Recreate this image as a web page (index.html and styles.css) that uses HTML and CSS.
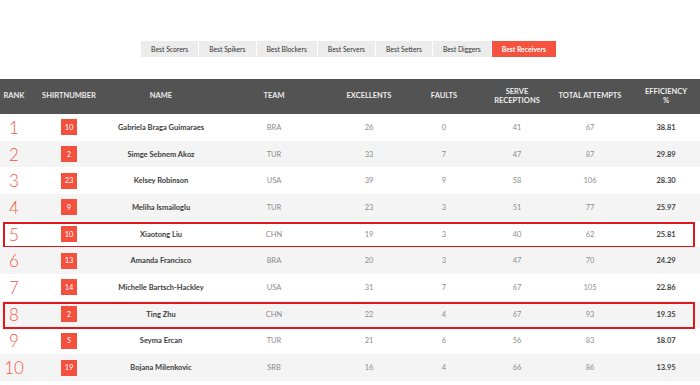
FILE: index.html
```html
<!DOCTYPE html>
<html lang="en">
<head>
    <meta charset="UTF-8">
    <title>Best Receivers</title>
    <link rel="stylesheet" href="styles.css">
</head>
<body>
    <nav class="tabs">
        <a class="tab">Best Scorers</a>
        <a class="tab">Best Spikers</a>
        <a class="tab">Best Blockers</a>
        <a class="tab">Best Servers</a>
        <a class="tab">Best Setters</a>
        <a class="tab">Best Diggers</a>
        <a class="tab active">Best Receivers</a>
    </nav>

    <div class="stats">
        <div class="row head">
            <div>RANK</div>
            <div>SHIRTNUMBER</div>
            <div>NAME</div>
            <div>TEAM</div>
            <div>EXCELLENTS</div>
            <div>FAULTS</div>
            <div>SERVE<br>RECEPTIONS</div>
            <div>TOTAL ATTEMPTS</div>
            <div>EFFICIENCY<br>%</div>
        </div>

        <div class="row">
            <div class="rank">1</div><div><span class="shirt">10</span></div>
            <div class="name">Gabriela Braga Guimaraes</div><div class="num">BRA</div>
            <div class="num">26</div><div class="num">0</div><div class="num">41</div><div class="num">67</div>
            <div class="eff">38.81</div>
        </div>
        <div class="row">
            <div class="rank">2</div><div><span class="shirt">2</span></div>
            <div class="name">Simge Sebnem Akoz</div><div class="num">TUR</div>
            <div class="num">33</div><div class="num">7</div><div class="num">47</div><div class="num">87</div>
            <div class="eff">29.89</div>
        </div>
        <div class="row">
            <div class="rank">3</div><div><span class="shirt">23</span></div>
            <div class="name">Kelsey Robinson</div><div class="num">USA</div>
            <div class="num">39</div><div class="num">9</div><div class="num">58</div><div class="num">106</div>
            <div class="eff">28.30</div>
        </div>
        <div class="row">
            <div class="rank">4</div><div><span class="shirt">9</span></div>
            <div class="name">Meliha Ismailoglu</div><div class="num">TUR</div>
            <div class="num">23</div><div class="num">3</div><div class="num">51</div><div class="num">77</div>
            <div class="eff">25.97</div>
        </div>
        <div class="row marked">
            <div class="rank">5</div><div><span class="shirt">10</span></div>
            <div class="name">Xiaotong Liu</div><div class="num">CHN</div>
            <div class="num">19</div><div class="num">3</div><div class="num">40</div><div class="num">62</div>
            <div class="eff">25.81</div>
        </div>
        <div class="row">
            <div class="rank">6</div><div><span class="shirt">13</span></div>
            <div class="name">Amanda Francisco</div><div class="num">BRA</div>
            <div class="num">20</div><div class="num">3</div><div class="num">47</div><div class="num">70</div>
            <div class="eff">24.29</div>
        </div>
        <div class="row">
            <div class="rank">7</div><div><span class="shirt">14</span></div>
            <div class="name">Michelle Bartsch-Hackley</div><div class="num">USA</div>
            <div class="num">31</div><div class="num">7</div><div class="num">67</div><div class="num">105</div>
            <div class="eff">22.86</div>
        </div>
        <div class="row marked">
            <div class="rank">8</div><div><span class="shirt">2</span></div>
            <div class="name">Ting Zhu</div><div class="num">CHN</div>
            <div class="num">22</div><div class="num">4</div><div class="num">67</div><div class="num">93</div>
            <div class="eff">19.35</div>
        </div>
        <div class="row">
            <div class="rank">9</div><div><span class="shirt">5</span></div>
            <div class="name">Seyma Ercan</div><div class="num">TUR</div>
            <div class="num">21</div><div class="num">6</div><div class="num">56</div><div class="num">83</div>
            <div class="eff">18.07</div>
        </div>
        <div class="row">
            <div class="rank">10</div><div><span class="shirt">19</span></div>
            <div class="name">Bojana Milenkovic</div><div class="num">SRB</div>
            <div class="num">16</div><div class="num">4</div><div class="num">66</div><div class="num">86</div>
            <div class="eff">13.95</div>
        </div>
    </div>
</body>
</html>
```

FILE: styles.css
```css
* {
    margin: 0;
    padding: 0;
    box-sizing: border-box;
}

body {
    width: 700px;
    height: 385px;
    overflow: hidden;
    background: #fff;
    font-family: 'Lato', 'Noto Sans', sans-serif;
    color: #333;
}

.tabs {
    display: flex;
    justify-content: center;
    gap: 1px;
    padding-top: 41px;
    padding-right: 3px;
}

.tab {
    height: 16px;
    padding: 0 10px;
    display: flex;
    align-items: center;
    background: #ececec;
    font-size: 6.8px;
    color: #333;
    cursor: pointer;
}

.tab.active {
    background: #f5533f;
    color: #fff;
    font-weight: 700;
}

.stats {
    margin-top: 22px;
}

.row {
    position: relative;
    display: grid;
    grid-template-columns: 28px 82px 102px 124px 66px 84px 62px 84px 68px;
    align-items: center;
    height: 26.7px;
    text-align: center;
    font-size: 7.5px;
}

.row:nth-child(odd) {
    background: #f4f4f4;
}

.row.head {
    height: 35px;
    background: #535353;
    color: #ececec;
    font-weight: 700;
    line-height: 1.1;
}

.rank {
    font-size: 17px;
    font-weight: 300;
    color: #f15a45;
}

.shirt {
    display: inline-flex;
    justify-content: center;
    align-items: center;
    width: 16px;
    height: 16px;
    background: #f4503e;
    color: #fff;
    font-size: 7.5px;
}

.name {
    font-weight: 700;
    color: #3c3c3c;
}

.num {
    color: #8c8c8c;
}

.eff {
    font-weight: 700;
    color: #444;
}

/* highlighted players */
.row.marked::after {
    content: "";
    position: absolute;
    top: 1px;
    bottom: -1px;
    left: 3px;
    right: 5px;
    border: 2px solid #e1171c;
}
```
